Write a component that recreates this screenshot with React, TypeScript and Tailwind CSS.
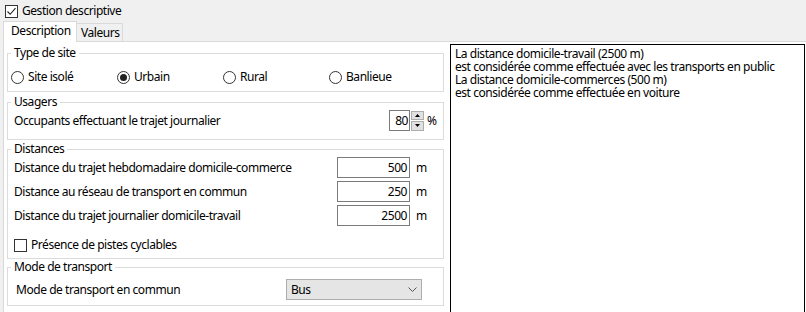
import React from 'react';

const font = { fontFamily: '"Noto Sans", "Open Sans", sans-serif' };

const Check: React.FC<{ checked?: boolean }> = ({ checked }) => (
  <span className="w-[13px] h-[13px] border border-[#333] bg-white flex items-center justify-center shrink-0">
    {checked && (
      <svg width="11" height="11" viewBox="0 0 11 11">
        <path d="M1.5 5.5 L4.2 8.3 L9.5 2.2" fill="none" stroke="#222" strokeWidth="1.1" />
      </svg>
    )}
  </span>
);

const Radio: React.FC<{ label: string; checked?: boolean }> = ({ label, checked }) => (
  <div className="w-[106px] flex items-center gap-[4px]">
    <span className="w-[13px] h-[13px] rounded-full border border-[#333] bg-white flex items-center justify-center shrink-0">
      {checked && <span className="w-[7px] h-[7px] rounded-full bg-[#222]" />}
    </span>
    <span>{label}</span>
  </div>
);

const Group: React.FC<{ title: string; cls: string; children: React.ReactNode }> = ({ title, cls, children }) => (
  <fieldset className={`w-[437px] border border-[#dcdcdc] pl-[3px] ${cls}`}>
    <legend className="px-[3px] leading-[14px]">{title}</legend>
    {children}
  </fieldset>
);

const NumBox: React.FC<{ value: string }> = ({ value }) => (
  <div className="w-[73px] h-[21px] border border-[#7a7a7a] bg-white flex items-center justify-end pr-[2px]">{value}</div>
);

export default function App() {
  return (
    <div className="w-[806px] h-[312px] bg-[#f0f0f0] overflow-hidden text-[12px] tracking-[-0.45px] text-black" style={font}>
      <div className="h-[21px] flex items-center gap-[4px] pl-[5px] pt-[1px]">
        <Check checked />
        <span>Gestion descriptive</span>
      </div>

      <div className="h-[20px] ml-[3px] flex items-end">
        <div className="relative z-10 h-[21px] -mb-px w-[74px] border border-b-0 border-[#d9d9d9] bg-white pl-[7px] leading-[18px]">
          Description
        </div>
        <div className="h-[18px] w-[46px] border border-l-0 border-b-0 border-[#d9d9d9] bg-[#f0f0f0] pl-[4px] leading-[17px]">
          Valeurs
        </div>
      </div>

      <div className="ml-[3px] h-[271px] border-t border-l border-[#d9d9d9] bg-white flex">
        <div className="w-[446px] pl-[3px] pt-[4px] flex flex-col">
          <Group title="Type de site" cls="h-[46px]">
            <div className="mt-[10px] h-[14px] flex items-center">
              <Radio label="Site isolé" />
              <Radio label="Urbain" checked />
              <Radio label="Rural" />
              <Radio label="Banlieue" />
            </div>
          </Group>

          <Group title="Usagers" cls="h-[45px] mt-[3px]">
            <div className="mt-[1px] h-[21px] flex items-center pl-[3px]">
              <span className="w-[375px]">Occupants effectuant le trajet journalier</span>
              <div className="w-[21px] h-[21px] border border-[#7a7a7a] bg-white flex items-center justify-end pr-[1px]">80</div>
              <div className="ml-[1px] w-[13px] h-[20px] flex flex-col gap-px">
                <div className="flex-1 bg-[#e1e1e1] border border-[#adadad] flex items-center justify-center">
                  <svg width="5" height="3" viewBox="0 0 5 3"><path d="M0 3 L2.5 0 L5 3 Z" fill="#000" /></svg>
                </div>
                <div className="flex-1 bg-[#e1e1e1] border border-[#adadad] flex items-center justify-center">
                  <svg width="5" height="3" viewBox="0 0 5 3"><path d="M0 0 L2.5 3 L5 0 Z" fill="#000" /></svg>
                </div>
              </div>
              <span className="ml-[3px]">%</span>
            </div>
          </Group>

          <Group title="Distances" cls="h-[117px] mt-[2px]">
            <div className="mt-[1px] pl-[3px] flex flex-col gap-[3px]">
              <div className="h-[21px] flex items-center">
                <span className="w-[323px]">Distance du trajet hebdomadaire domicile-commerce</span>
                <NumBox value="500" />
                <span className="ml-[6px]">m</span>
              </div>
              <div className="h-[21px] flex items-center">
                <span className="w-[323px]">Distance au réseau de transport en commun</span>
                <NumBox value="250" />
                <span className="ml-[6px]">m</span>
              </div>
              <div className="h-[21px] flex items-center">
                <span className="w-[323px]">Distance du trajet journalier domicile-travail</span>
                <NumBox value="2500" />
                <span className="ml-[6px]">m</span>
              </div>
              <div className="mt-[9px] h-[14px] flex items-center gap-[4px]">
                <Check />
                <span>Présence de pistes cyclables</span>
              </div>
            </div>
          </Group>

          <Group title="Mode de transport" cls="h-[46px] mt-[1px]">
            <div className="mt-[5px] pl-[5px] h-[21px] flex items-center">
              <span className="w-[270px]">Mode de transport en commun</span>
              <div className="w-[136px] h-[21px] bg-[#e5e5e5] border border-[#adadad] flex items-center justify-between pl-[4px] pr-[4px]">
                <span>Bus</span>
                <svg width="9" height="5" viewBox="0 0 9 5"><path d="M0.5 0.5 L4.5 4.5 L8.5 0.5" fill="none" stroke="#555" strokeWidth="1" /></svg>
              </div>
            </div>
          </Group>
        </div>

        <div className="mt-[2px] w-[355px] h-[300px] border border-black bg-white pl-[4px] pt-[2px] leading-[13px]">
          <div>La distance domicile-travail (2500 m)</div>
          <div>est considérée comme effectuée avec les transports en public</div>
          <div>La distance domicile-commerces (500 m)</div>
          <div>est considérée comme effectuée en voiture</div>
        </div>
      </div>
    </div>
  );
}
